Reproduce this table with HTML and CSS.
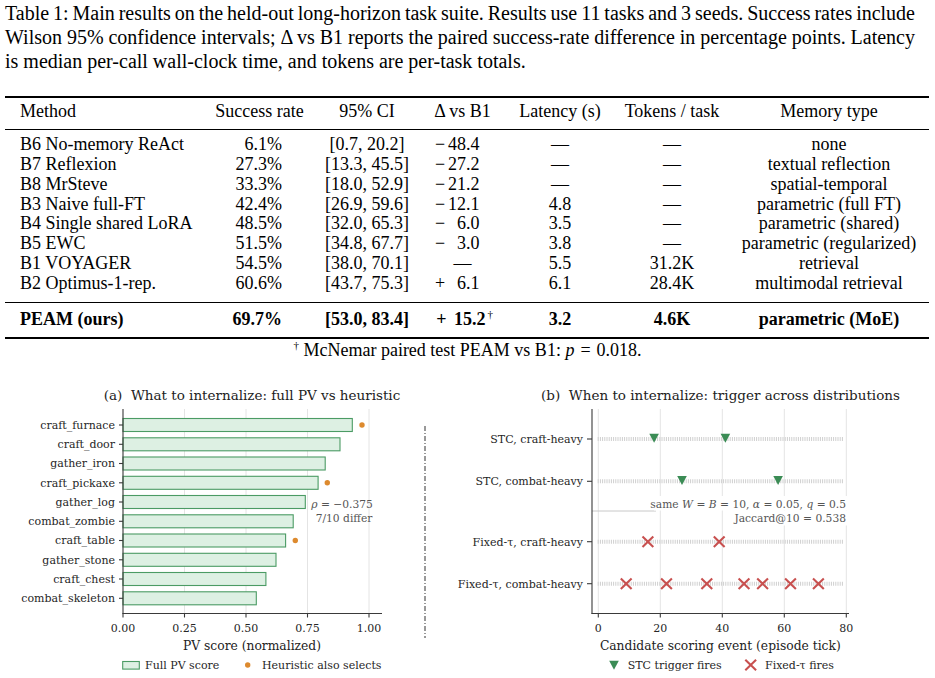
FILE: index.html
```html
<!DOCTYPE html>
<html lang="en">
<head>
  <meta charset="UTF-8" />
  <title>Main results</title>
  <link rel="stylesheet" href="styles.css">
</head>
<body>

  <div class="caption">
    <span class="line just">Table 1: Main results on the held-out long-horizon task suite. Results use 11 tasks and 3 seeds. Success rates include</span>
    <span class="line just">Wilson 95% confidence intervals; &Delta; vs B1 reports the paired success-rate difference in percentage points. Latency</span>
    <span class="line">is median per-call wall-clock time, and tokens are per-task totals.</span>
  </div>

  <table class="results">
    <colgroup>
      <col class="c-method">
      <col class="c-rate">
      <col class="c-ci">
      <col class="c-delta">
      <col class="c-lat">
      <col class="c-tok">
      <col class="c-mem">
    </colgroup>
    <thead>
      <tr>
        <th>Method</th>
        <th>Success rate</th>
        <th>95% CI</th>
        <th>&Delta; vs B1</th>
        <th>Latency (s)</th>
        <th>Tokens / task</th>
        <th>Memory type</th>
      </tr>
    </thead>
    <tbody>
      <tr class="first">
        <td>B6 No-memory ReAct</td><td>6.1%</td><td>[0.7, 20.2]</td>
        <td class="num"><span class="sign">&minus;</span><span class="int">48</span>.4</td>
        <td>&mdash;</td><td>&mdash;</td><td>none</td>
      </tr>
      <tr>
        <td>B7 Reflexion</td><td>27.3%</td><td>[13.3, 45.5]</td>
        <td class="num"><span class="sign">&minus;</span><span class="int">27</span>.2</td>
        <td>&mdash;</td><td>&mdash;</td><td>textual reflection</td>
      </tr>
      <tr>
        <td>B8 MrSteve</td><td>33.3%</td><td>[18.0, 52.9]</td>
        <td class="num"><span class="sign">&minus;</span><span class="int">21</span>.2</td>
        <td>&mdash;</td><td>&mdash;</td><td>spatial-temporal</td>
      </tr>
      <tr>
        <td>B3 Naive full-FT</td><td>42.4%</td><td>[26.9, 59.6]</td>
        <td class="num"><span class="sign">&minus;</span><span class="int">12</span>.1</td>
        <td>4.8</td><td>&mdash;</td><td>parametric (full FT)</td>
      </tr>
      <tr>
        <td>B4 Single shared LoRA</td><td>48.5%</td><td>[32.0, 65.3]</td>
        <td class="num"><span class="sign">&minus;</span><span class="int">6</span>.0</td>
        <td>3.5</td><td>&mdash;</td><td>parametric (shared)</td>
      </tr>
      <tr>
        <td>B5 EWC</td><td>51.5%</td><td>[34.8, 67.7]</td>
        <td class="num"><span class="sign">&minus;</span><span class="int">3</span>.0</td>
        <td>3.8</td><td>&mdash;</td><td>parametric (regularized)</td>
      </tr>
      <tr>
        <td>B1 VOYAGER</td><td>54.5%</td><td>[38.0, 70.1]</td>
        <td>&mdash;</td>
        <td>5.5</td><td>31.2K</td><td>retrieval</td>
      </tr>
      <tr class="last">
        <td>B2 Optimus-1-rep.</td><td>60.6%</td><td>[43.7, 75.3]</td>
        <td class="num"><span class="sign">+</span><span class="int">6</span>.1</td>
        <td>6.1</td><td>28.4K</td><td>multimodal retrieval</td>
      </tr>
    </tbody>
    <tbody class="ours">
      <tr>
        <td>PEAM (ours)</td><td>69.7%</td><td>[53.0, 83.4]</td>
        <td class="num"><span class="sign">+</span><span class="int">15</span>.2<sup>&dagger;</sup></td>
        <td>3.2</td><td>4.6K</td><td>parametric (MoE)</td>
      </tr>
    </tbody>
  </table>

  <p class="footnote"><sup>&dagger;</sup> McNemar paired test PEAM vs B1: <i>p</i>&#8196;=&#8196;0.018.</p>

  <div class="figures">
    <svg class="panel panel-a" width="440" height="303" viewBox="0 375 440 303">
      <text class="title" x="252" y="399.5" text-anchor="middle">(a)&#160; What to internalize: full PV vs heuristic</text>

      <g class="grid">
        <line x1="184.5" y1="409" x2="184.5" y2="613.5" />
        <line x1="246" y1="409" x2="246" y2="613.5" />
        <line x1="307.5" y1="409" x2="307.5" y2="613.5" />
        <line x1="369" y1="409" x2="369" y2="613.5" />
      </g>

      <g class="bars">
        <rect x="123" y="418.5" width="229.3" height="13" />
        <rect x="123" y="437.8" width="217" height="13" />
        <rect x="123" y="457" width="202.2" height="13" />
        <rect x="123" y="476.3" width="195.1" height="13" />
        <rect x="123" y="495.5" width="182.3" height="13" />
        <rect x="123" y="514.8" width="170.2" height="13" />
        <rect x="123" y="534" width="162.6" height="13" />
        <rect x="123" y="553.3" width="153" height="13" />
        <rect x="123" y="572.5" width="142.9" height="13" />
        <rect x="123" y="591.8" width="133.3" height="13" />
      </g>

      <g class="dots">
        <circle cx="362" cy="425" r="2.7" />
        <circle cx="327.3" cy="482.8" r="2.7" />
        <circle cx="295.3" cy="540.5" r="2.7" />
      </g>

      <g class="ticks">
        <line x1="119" y1="425" x2="123" y2="425" />
        <line x1="119" y1="444.3" x2="123" y2="444.3" />
        <line x1="119" y1="463.5" x2="123" y2="463.5" />
        <line x1="119" y1="482.8" x2="123" y2="482.8" />
        <line x1="119" y1="502" x2="123" y2="502" />
        <line x1="119" y1="521.3" x2="123" y2="521.3" />
        <line x1="119" y1="540.5" x2="123" y2="540.5" />
        <line x1="119" y1="559.8" x2="123" y2="559.8" />
        <line x1="119" y1="579" x2="123" y2="579" />
        <line x1="119" y1="598.3" x2="123" y2="598.3" />
        <line x1="123" y1="613.5" x2="123" y2="617.5" />
        <line x1="184.5" y1="613.5" x2="184.5" y2="617.5" />
        <line x1="246" y1="613.5" x2="246" y2="617.5" />
        <line x1="307.5" y1="613.5" x2="307.5" y2="617.5" />
        <line x1="369" y1="613.5" x2="369" y2="617.5" />
      </g>

      <g class="tick-label" text-anchor="end">
        <text x="115" y="428.8">craft_furnace</text>
        <text x="115" y="448.1">craft_door</text>
        <text x="115" y="467.3">gather_iron</text>
        <text x="115" y="486.6">craft_pickaxe</text>
        <text x="115" y="505.8">gather_log</text>
        <text x="115" y="525.1">combat_zombie</text>
        <text x="115" y="544.3">craft_table</text>
        <text x="115" y="563.6">gather_stone</text>
        <text x="115" y="582.8">craft_chest</text>
        <text x="115" y="602.1">combat_skeleton</text>
      </g>

      <g class="tick-label" text-anchor="middle">
        <text x="123" y="632">0.00</text>
        <text x="184.5" y="632">0.25</text>
        <text x="246" y="632">0.50</text>
        <text x="307.5" y="632">0.75</text>
        <text x="369" y="632">1.00</text>
      </g>

      <g class="spines">
        <line x1="123" y1="409" x2="123" y2="614" />
        <line x1="122.5" y1="613.5" x2="382" y2="613.5" />
      </g>

      <g class="note" text-anchor="middle">
        <text x="342" y="508"><tspan font-style="italic">&#961;</tspan> = &#8722;0.375</text>
        <text x="344" y="521.5">7/10 differ</text>
      </g>

      <text class="axis-label" x="252" y="649.5" text-anchor="middle">PV score (normalized)</text>

      <g class="legend">
        <rect class="swatch" x="122.7" y="661.5" width="16.6" height="7.6" />
        <text x="145" y="669">Full PV score</text>
        <circle class="dot" cx="247.7" cy="665" r="2.7" />
        <text x="262" y="669">Heuristic also selects</text>
      </g>

      <line class="divider" x1="425" y1="426" x2="425" y2="638" />
    </svg>

    <svg class="panel panel-b" width="495" height="303" viewBox="440 375 495 303">
      <defs>
        <path id="tri" d="M-4.8 -5.2 L4.8 -5.2 L0 3.8 Z" />
        <path id="cross" d="M-5.4 -5.2 L5.4 5.2 M-5.4 5.2 L5.4 -5.2" />
      </defs>

      <text class="title" x="720.5" y="399.5" text-anchor="middle">(b)&#160; When to internalize: trigger across distributions</text>

      <g class="grid">
        <line x1="598.3" y1="409" x2="598.3" y2="613.5" />
        <line x1="660.3" y1="409" x2="660.3" y2="613.5" />
        <line x1="722.3" y1="409" x2="722.3" y2="613.5" />
        <line x1="784.3" y1="409" x2="784.3" y2="613.5" />
        <line x1="846.3" y1="409" x2="846.3" y2="613.5" />
      </g>

      <g class="track">
        <line x1="597.7" y1="439" x2="844" y2="439" />
        <line x1="597.7" y1="481.3" x2="844" y2="481.3" />
        <line x1="597.7" y1="541.7" x2="844" y2="541.7" />
        <line x1="597.7" y1="583.7" x2="844" y2="583.7" />
      </g>

      <line class="sep" x1="592" y1="511" x2="656" y2="511" />
      <rect class="box" x="654" y="496" width="196" height="14.5" />
      <rect class="box" x="724" y="510.5" width="126" height="15" />
      <g class="note" text-anchor="end">
        <text x="846" y="507.5">same <tspan font-style="italic">W</tspan> = <tspan font-style="italic">B</tspan> = 10, <tspan font-style="italic">&#945;</tspan> = 0.05, <tspan font-style="italic">q</tspan> = 0.5</text>
        <text x="846" y="521.5">Jaccard@10 = 0.538</text>
      </g>

      <g class="tri">
        <use href="#tri" x="654.1" y="439" />
        <use href="#tri" x="725.4" y="439" />
        <use href="#tri" x="682" y="481.3" />
        <use href="#tri" x="778.1" y="481.3" />
      </g>

      <g class="cross">
        <use href="#cross" x="647.9" y="541.7" />
        <use href="#cross" x="719.2" y="541.7" />
        <use href="#cross" x="626.2" y="583.7" />
        <use href="#cross" x="666.5" y="583.7" />
        <use href="#cross" x="706.8" y="583.7" />
        <use href="#cross" x="744" y="583.7" />
        <use href="#cross" x="762.6" y="583.7" />
        <use href="#cross" x="790.5" y="583.7" />
        <use href="#cross" x="818.4" y="583.7" />
      </g>

      <g class="ticks">
        <line x1="587" y1="439" x2="592" y2="439" />
        <line x1="587" y1="481.3" x2="592" y2="481.3" />
        <line x1="587" y1="541.7" x2="592" y2="541.7" />
        <line x1="587" y1="583.7" x2="592" y2="583.7" />
        <line x1="598.3" y1="613.5" x2="598.3" y2="617.5" />
        <line x1="660.3" y1="613.5" x2="660.3" y2="617.5" />
        <line x1="722.3" y1="613.5" x2="722.3" y2="617.5" />
        <line x1="784.3" y1="613.5" x2="784.3" y2="617.5" />
        <line x1="846.3" y1="613.5" x2="846.3" y2="617.5" />
      </g>

      <g class="tick-label" text-anchor="end">
        <text x="583" y="442.8">STC, craft-heavy</text>
        <text x="583" y="485.1">STC, combat-heavy</text>
        <text x="583" y="545.5">Fixed-&#964;, craft-heavy</text>
        <text x="583" y="587.5">Fixed-&#964;, combat-heavy</text>
      </g>

      <g class="tick-label" text-anchor="middle">
        <text x="598.3" y="632">0</text>
        <text x="660.3" y="632">20</text>
        <text x="722.3" y="632">40</text>
        <text x="784.3" y="632">60</text>
        <text x="846.3" y="632">80</text>
      </g>

      <g class="spines">
        <line x1="592" y1="409" x2="592" y2="614" />
        <line x1="591.5" y1="613.5" x2="849" y2="613.5" />
      </g>

      <text class="axis-label" x="720.3" y="649.5" text-anchor="middle">Candidate scoring event (episode tick)</text>

      <g class="legend">
        <use class="tri-mark" href="#tri" x="614" y="666" />
        <text x="627.7" y="669">STC trigger fires</text>
        <use class="cross-mark" href="#cross" x="750.7" y="665" />
        <text x="765" y="669">Fixed-&#964; fires</text>
      </g>
    </svg>
  </div>

</body>
</html>
```

FILE: styles.css
```css
* {
  box-sizing: border-box;
}

body {
  margin: 0;
  width: 935px;
  height: 678px;
  overflow: hidden;
  background: #fff;
  color: #000;
  font-family: "Liberation Serif", "Times New Roman", serif;
}

/* caption de la tabla */
.caption {
  margin: 1px 20px 0 5px;
  font-size: 20px;
  line-height: 24px;
}

.caption .line {
  display: block;
}

.caption .just {
  word-spacing: -1.6px;
  text-align: justify;
  text-align-last: justify;
}

/* tabla principal */
.results {
  margin: 23px 0 0 5px;
  width: 924px;
  border-collapse: separate;
  border-spacing: 0;
  table-layout: fixed;
  font-size: 18px;
  border-top: 2px solid #000;
  border-bottom: 2px solid #000;
}

.c-method { width: 200px; }
.c-rate { width: 109px; }
.c-ci { width: 106px; }
.c-delta { width: 85px; }
.c-lat { width: 110px; }
.c-tok { width: 114px; }
.c-mem { width: 200px; }

.results th,
.results td {
  padding: 0;
  text-align: center;
  white-space: nowrap;
  line-height: 19.8px;
}

.results th {
  font-weight: normal;
  padding: 3.5px 0 7.5px;
  border-bottom: 1px solid #000;
}

.results th:first-child,
.results td:first-child {
  text-align: left;
  padding-left: 15px;
}

/* tasa de exito alineada a la derecha (columna decimal) */
.results td:nth-child(2) {
  text-align: right;
  padding-right: 32px;
}

/* columna delta: signo y parte entera alineados */
.results td.num {
  text-align: left;
  padding-left: 12px;
}

.sign {
  display: inline-block;
  width: 16px;
  text-align: center;
}

.int {
  display: inline-block;
  width: 18px;
  text-align: right;
}

.ours .sign {
  width: 19px;
}

.ours .int {
  width: 21px;
}

.results tr.first td {
  padding-top: 5.5px;
}

.results tr.last td {
  padding-bottom: 8px;
}

.results .ours td {
  font-weight: bold;
  border-top: 1px solid #000;
  padding-top: 7px;
  padding-bottom: 8px;
}

.results sup {
  font-size: 11px;
  font-weight: normal;
  line-height: 0;
  vertical-align: 7px;
  margin-left: 2px;
}

.footnote {
  margin: 1px 0 0;
  text-align: center;
  font-size: 18px;
  line-height: 20px;
}

.footnote sup {
  font-size: 11px;
  line-height: 0;
  vertical-align: 7px;
}

/* figuras */
.figures {
  display: flex;
  margin-top: 15px;
}

.panel {
  display: block;
  flex: none;
  font-family: "DejaVu Serif", serif;
  overflow: visible;
}

.title {
  font-size: 13.5px;
  fill: #222;
}

.axis-label {
  font-size: 12.3px;
  fill: #222;
}

.tick-label {
  font-size: 11px;
  fill: #262626;
}

.note {
  font-size: 10.7px;
  fill: #555;
}

.legend {
  font-size: 11px;
  fill: #262626;
}

.grid line {
  stroke: #e4e4e4;
  stroke-width: 1;
}

.spines line,
.ticks line {
  stroke: #3a3a3a;
  stroke-width: 1.1;
}

.bars rect,
.legend .swatch {
  fill: #ddf0e3;
  stroke: #4b9b64;
  stroke-width: 1.1;
}

.dots circle,
.legend .dot {
  fill: #dd8a2e;
}

.divider {
  stroke: #333;
  stroke-width: 1;
  stroke-dasharray: 5 2 1 2;
}

.track line {
  stroke: #cfcfcf;
  stroke-width: 4;
  stroke-dasharray: 1 1.2;
}

.sep {
  stroke: #c8c8c8;
  stroke-width: 1;
}

.box {
  fill: #fff;
}

.tri use,
.legend .tri-mark {
  fill: #3b8c55;
}

.cross use,
.legend .cross-mark {
  fill: none;
  stroke: #c8504f;
  stroke-width: 2.1;
}
```
